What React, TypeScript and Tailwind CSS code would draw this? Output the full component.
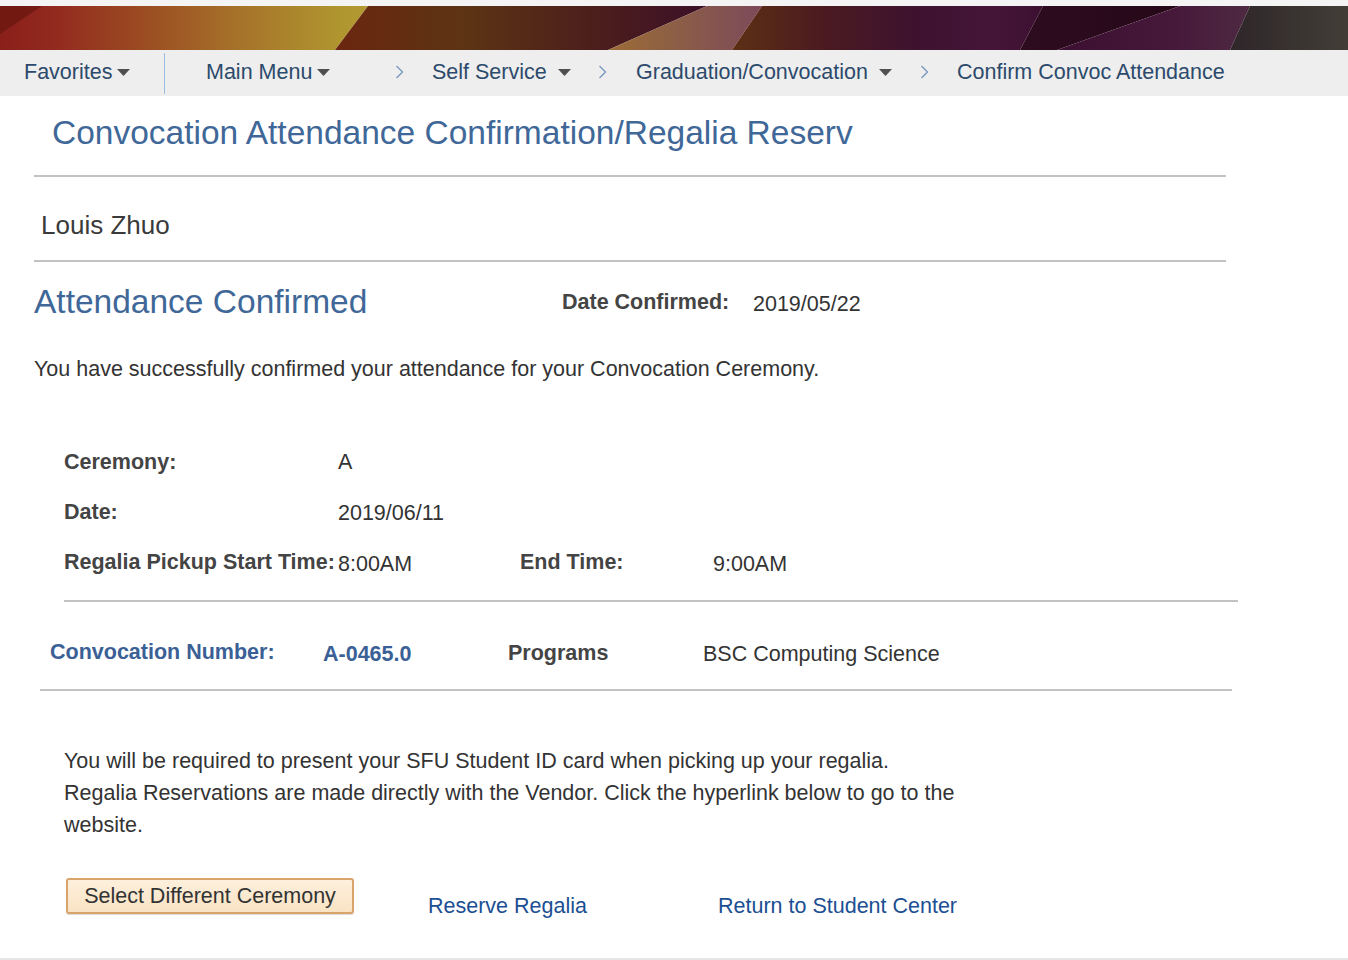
import React from "react";

const Caret = () => (
  <svg width="13" height="7" viewBox="0 0 13 7" className="shrink-0">
    <polygon points="0,0 13,0 6.5,7" fill="#4f4f4f" />
  </svg>
);

const Chevron = () => (
  <svg width="9" height="16" viewBox="0 0 9 16" className="shrink-0">
    <polyline points="1.5,2 7.5,8 1.5,14" fill="none" stroke="#7d98bf" strokeWidth="1.4" />
  </svg>
);

const Banner = () => (
  <svg className="block w-full h-[44px]" viewBox="0 0 1348 44" preserveAspectRatio="none">
    <defs>
      <linearGradient id="gA" gradientUnits="userSpaceOnUse" x1="0" y1="0" x2="370" y2="0">
        <stop offset="0" stopColor="#8a1f1a" />
        <stop offset="0.15" stopColor="#932a1f" />
        <stop offset="0.38" stopColor="#9b4b22" />
        <stop offset="0.65" stopColor="#a6732a" />
        <stop offset="0.92" stopColor="#b0962f" />
        <stop offset="1" stopColor="#b49a33" />
      </linearGradient>
      <linearGradient id="gB" gradientUnits="userSpaceOnUse" x1="335" y1="0" x2="707" y2="0">
        <stop offset="0" stopColor="#6b2610" />
        <stop offset="0.35" stopColor="#5c3414" />
        <stop offset="0.7" stopColor="#4c1e1c" />
        <stop offset="1" stopColor="#3c1028" />
      </linearGradient>
      <linearGradient id="gC" gradientUnits="userSpaceOnUse" x1="608" y1="0" x2="762" y2="0">
        <stop offset="0" stopColor="#9c6c36" />
        <stop offset="0.5" stopColor="#8a5c48" />
        <stop offset="1" stopColor="#7c4a5a" />
      </linearGradient>
      <linearGradient id="gD" gradientUnits="userSpaceOnUse" x1="732" y1="0" x2="1043" y2="0">
        <stop offset="0" stopColor="#5c3014" />
        <stop offset="0.3" stopColor="#4a1a20" />
        <stop offset="0.6" stopColor="#3e1230" />
        <stop offset="0.85" stopColor="#451538" />
        <stop offset="1" stopColor="#3c1030" />
      </linearGradient>
      <linearGradient id="gE" gradientUnits="userSpaceOnUse" x1="1020" y1="0" x2="1180" y2="0">
        <stop offset="0" stopColor="#2e0c20" />
        <stop offset="1" stopColor="#250818" />
      </linearGradient>
      <linearGradient id="gF" gradientUnits="userSpaceOnUse" x1="1057" y1="0" x2="1250" y2="0">
        <stop offset="0" stopColor="#3c1030" />
        <stop offset="0.6" stopColor="#46183a" />
        <stop offset="1" stopColor="#4e2a42" />
      </linearGradient>
      <linearGradient id="gG" gradientUnits="userSpaceOnUse" x1="1230" y1="0" x2="1348" y2="0">
        <stop offset="0" stopColor="#2e2629" />
        <stop offset="1" stopColor="#423e37" />
      </linearGradient>
    </defs>
    <polygon points="0,0 368,0 335,44 0,44" fill="url(#gA)" />
    <polygon points="0,0 42,0 0,28" fill="#6c1810" opacity="0.8" />
    <polygon points="368,0 707,0 608,44 335,44" fill="url(#gB)" />
    <polygon points="707,0 762,0 732,44 608,44" fill="url(#gC)" />
    <polygon points="762,0 1043,0 1020,44 732,44" fill="url(#gD)" />
    <polygon points="1043,0 1180,0 1057,44 1020,44" fill="url(#gE)" />
    <polygon points="1180,0 1250,0 1230,44 1057,44" fill="url(#gF)" />
    <polygon points="1250,0 1348,0 1348,44 1230,44" fill="url(#gG)" />
  </svg>
);

const Hr = ({ className }: { className: string }) => <div className={`h-[2px] bg-[#c2c2c2] ${className}`} />;

export default function App() {
  return (
    <div className="w-[1348px] h-[960px] bg-white font-['Liberation_Sans',Arial,sans-serif] text-[21.5px] text-[#333] overflow-hidden">
      <div className="h-[6px] bg-[#f4f4f4]" />
      <Banner />

      {/* breadcrumb nav */}
      <div className="h-[46px] pb-[2px] bg-[#eeeeee] flex items-center text-[#2c4a6b] leading-[44px] whitespace-nowrap">
        <div className="w-[164px] pl-[24px] flex items-center gap-[5px]">
          Favorites <Caret />
        </div>
        <div className="w-px h-[41px] mt-[2px] bg-[#9dbde0]" />
        <div className="w-[230px] pl-[41px] flex items-center gap-[5px]">
          Main Menu <Caret />
        </div>
        <div className="w-[37px]"><Chevron /></div>
        <div className="w-[166px] flex items-center gap-[11px]">
          Self Service <Caret />
        </div>
        <div className="w-[38px]"><Chevron /></div>
        <div className="w-[284px] flex items-center gap-[11px]">
          Graduation/Convocation <Caret />
        </div>
        <div className="w-[37px]"><Chevron /></div>
        <div>Confirm Convoc Attendance</div>
      </div>

      <div className="h-[79px] pt-[17px] pl-[52px] text-[33.5px] leading-[40px] text-[#3f6898] whitespace-nowrap">
        Convocation Attendance Confirmation/Regalia Reserv
      </div>
      <Hr className="ml-[34px] w-[1192px]" />

      <div className="h-[83px] pt-[32px] pl-[41px] text-[26px] leading-[32px] text-[#3a3a3a]">Louis Zhuo</div>
      <Hr className="ml-[34px] w-[1192px]" />

      <div className="mt-[20px] h-[40px] pl-[34px] flex items-center">
        <div className="w-[528px] text-[33.5px] leading-[40px] text-[#3f6898]">Attendance Confirmed</div>
        <div className="w-[191px] font-bold text-[#444] leading-[32px]">Date Confirmed:</div>
        <div className="leading-[32px] mt-[3px]">2019/05/22</div>
      </div>

      <div className="mt-[31px] pl-[34px] leading-[32px]">
        You have successfully confirmed your attendance for your Convocation Ceremony.
      </div>

      {/* ceremony details */}
      <div className="mt-[61px] pl-[64px] flex flex-col gap-[18px] leading-[32px]">
        <div className="flex h-[32px]">
          <div className="w-[274px] font-bold text-[#444]">Ceremony:</div>
          <div>A</div>
        </div>
        <div className="flex h-[32px]">
          <div className="w-[274px] font-bold text-[#444]">Date:</div>
          <div className="mt-[1px]">2019/06/11</div>
        </div>
        <div className="flex h-[32px]">
          <div className="w-[274px] font-bold text-[#444] whitespace-nowrap">Regalia Pickup Start Time:</div>
          <div className="w-[182px] mt-[2px]">8:00AM</div>
          <div className="w-[193px] font-bold text-[#444]">End Time:</div>
          <div className="mt-[2px]">9:00AM</div>
        </div>
      </div>
      <Hr className="mt-[22px] ml-[64px] w-[1174px]" />

      <div className="mt-[34px] h-[32px] pl-[50px] flex leading-[32px]">
        <div className="w-[273px] font-bold text-[#3a6096]">Convocation Number:</div>
        <div className="w-[185px] font-bold text-[#3a6096] mt-[2px]">A-0465.0</div>
        <div className="w-[195px] font-bold text-[#444] mt-[1px]">Programs</div>
        <div className="mt-[2px]">BSC Computing Science</div>
      </div>
      <Hr className="mt-[21px] ml-[40px] w-[1192px]" />

      <p className="mt-[54px] pl-[64px] leading-[32px]">
        You will be required to present your SFU Student ID card when picking up your regalia.
        <br />
        Regalia Reservations are made directly with the Vendor. Click the hyperlink below to go to the
        <br />
        website.
      </p>

      <div className="mt-[37px] h-[80px] pl-[66px] flex items-start">
        <button className="w-[288px] h-[36px] rounded-[3px] border-2 border-[#d9a46c] bg-gradient-to-b from-[#fdf0dc] to-[#fae3c4] text-[#333] leading-[30px] shadow-[0_1px_1px_rgba(0,0,0,0.15)]">
          Select Different Ceremony
        </button>
        <a className="ml-[74px] w-[290px] mt-[12px] leading-[32px] text-[#1c4f93] cursor-pointer">Reserve Regalia</a>
        <a className="mt-[12px] leading-[32px] text-[#1c4f93] cursor-pointer">Return to Student Center</a>
      </div>

      <div className="h-[2px] bg-[#e6e6e6]" />
    </div>
  );
}
